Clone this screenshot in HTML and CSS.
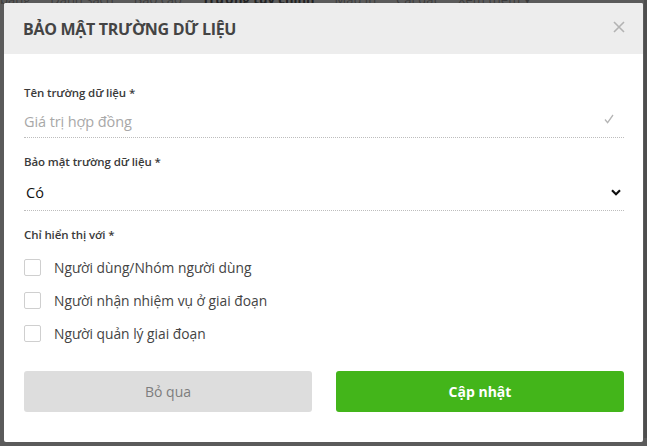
FILE: index.html
```html
<!DOCTYPE html>
<html lang="vi">
<head>
<meta charset="utf-8">
<link rel="stylesheet" href="styles.css">
</head>
<body>
<div class="page">
  <nav class="crumbs">
    <span>bảng</span><span>Danh sách</span><span>Báo cáo</span><span class="active">Trường tùy chỉnh</span><span>Mẫu in</span><span>Cài đặt</span><span>Xem thêm ▾</span>
  </nav>
</div>
<div class="modal">
  <div class="modal-header">
    <h2 class="modal-title">BẢO MẬT TRƯỜNG DỮ LIỆU</h2>
    <svg class="close" width="12" height="12" viewBox="0 0 12 12"><path d="M1 1 L11 11 M11 1 L1 11" stroke="#b3b3b3" stroke-width="1.6" fill="none"/></svg>
  </div>
  <div class="modal-body">
    <div class="field">
      <div class="label">Tên trường dữ liệu *</div>
      <div class="control">
        <span class="placeholder">Giá trị hợp đồng</span>
        <svg class="check" width="10" height="10" viewBox="0 0 10 10"><path d="M1 5.5 L3.6 8.6 L9 1" stroke="#b5b5b5" stroke-width="1.3" fill="none"/></svg>
      </div>
    </div>
    <div class="field">
      <div class="label">Bảo mật trường dữ liệu *</div>
      <div class="control select">
        <span class="value">Có</span>
        <svg class="chev" width="10" height="7" viewBox="0 0 10 7"><path d="M1 1.2 L5 5.2 L9 1.2" stroke="#111" stroke-width="2.2" fill="none"/></svg>
      </div>
    </div>
    <div class="field">
      <div class="label">Chỉ hiển thị với *</div>
      <div class="options">
        <label class="option"><span class="box"></span><span>Người dùng/Nhóm người dùng</span></label>
        <label class="option"><span class="box"></span><span>Người nhận nhiệm vụ ở giai đoạn</span></label>
        <label class="option"><span class="box"></span><span>Người quản lý giai đoạn</span></label>
      </div>
    </div>
    <div class="actions">
      <button class="btn btn-cancel">Bỏ qua</button>
      <button class="btn btn-primary">Cập nhật</button>
    </div>
  </div>
</div>
</body>
</html>
```
FILE: styles.css
```css
* { box-sizing: border-box; }
html, body { margin: 0; padding: 0; }
body {
  width: 647px;
  height: 446px;
  overflow: hidden;
  background: #5b5b5b;
  font-family: "Open Sans", "Noto Sans", sans-serif;
  position: relative;
}
.page {
  height: 446px;
  border-right: 3px solid #4e4e4e;
}
.crumbs {
  display: flex;
  gap: 16px;
  margin-top: -8px;
  font-size: 13px;
  line-height: 14px;
  color: #3b3b3b;
  white-space: nowrap;
}
.crumbs span { padding-right: 4px; }
.crumbs .active { font-weight: 700; color: #222; }

.modal {
  position: absolute;
  left: 4px;
  top: 3px;
  width: 639px;
  height: 439px;
  background: #fff;
  border-radius: 2px;
  overflow: hidden;
}
.modal-header {
  height: 51px;
  background: #ededed;
  display: flex;
  align-items: center;
  justify-content: space-between;
  padding: 0 18px 0 19px;
}
.modal-title {
  margin: 0;
  font-size: 16px;
  font-weight: 700;
  color: #444;
  letter-spacing: -0.3px;
}
.close { margin-top: -4px; }

.modal-body {
  padding: 31px 19px 0 20px;
}
.field { margin-bottom: 16px; }
.label {
  font-size: 11.5px;
  line-height: 16px;
  font-weight: 600;
  color: #3a3a3a;
  letter-spacing: -0.1px;
}
.control {
  height: 37px;
  display: flex;
  align-items: center;
  justify-content: space-between;
  border-bottom: 1px dotted #bdbdbd;
  padding-top: 4px;
}
.placeholder { font-size: 14.5px; color: #a8a8a8; letter-spacing: -0.1px; }
.check { margin-right: 10px; margin-top: -4px; }
.select { height: 41px; padding-top: 4px; padding-left: 2px; }
.value { font-size: 14.5px; color: #111; }
.chev { margin-right: 3px; }

.options { display: flex; flex-direction: column; padding-top: 8px; }
.option {
  height: 33px;
  display: flex;
  align-items: center;
  gap: 13px;
  font-size: 13.8px;
  color: #444;
}
.box {
  width: 17px;
  height: 17px;
  border: 1px solid #cfcfcf;
  border-radius: 2px;
  background: #fff;
}
.actions {
  display: flex;
  gap: 24px;
  margin-top: 21px;
}
.btn {
  flex: 1;
  height: 41px;
  border: none;
  border-radius: 3px;
  font-family: inherit;
  font-size: 14px;
}
.btn-cancel { background: #dddddd; color: #7d7d7d; }
.btn-primary { background: #43b51a; color: #fff; font-weight: 700; }
```
